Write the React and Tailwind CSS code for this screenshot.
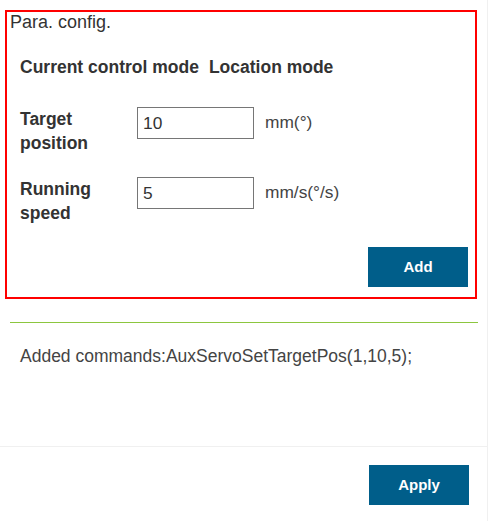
export default function App() {
  return (
    <div className="w-[488px] h-[521px] bg-white border-r border-[#f0f0f0] font-['Liberation_Sans',Arial,sans-serif] text-[#333]">
      <div className="pt-[10px] pl-[5px]">
        <div className="w-[472px] h-[289px] border-2 border-[#ff0000] flex flex-col">
          <div className="pl-[3px] text-[18px] leading-[20px] text-[#333]">Para. config.</div>

          <div className="mt-[25px] pl-[13px] text-[17.5px] leading-[20px] font-bold text-[#333] flex">
            <span>Current control mode</span>
            <span className="ml-[10px]">Location mode</span>
          </div>

          <div className="mt-[30px] pl-[13px] flex items-start">
            <div className="w-[100px] text-[17.5px] leading-[24px] font-bold">Target position</div>
            <div className="ml-[17px] flex items-center">
              <input
                defaultValue="10"
                className="w-[117px] h-[32px] border border-[#767676] pl-[5px] text-[17.33px] text-[#333] outline-none"
              />
              <span className="ml-[11px] text-[17.33px] text-[#444]">mm(°)</span>
            </div>
          </div>

          <div className="mt-[22px] pl-[13px] flex items-start">
            <div className="w-[100px] text-[17.5px] leading-[24px] font-bold">Running speed</div>
            <div className="ml-[17px] flex items-center">
              <input
                defaultValue="5"
                className="w-[117px] h-[32px] border border-[#767676] pl-[5px] text-[17.33px] text-[#333] outline-none"
              />
              <span className="ml-[11px] text-[17.33px] text-[#444]">mm/s(°/s)</span>
            </div>
          </div>

          <div className="mt-[22px] pr-[7px] flex justify-end">
            <button className="w-[100px] h-[40px] bg-[#005e8a] text-white text-[15px] font-bold">Add</button>
          </div>
        </div>
      </div>

      <div className="mt-[23px] ml-[10px] w-[468px] h-px bg-[#8cc63f]"></div>

      <div className="h-[123px] pt-[23px] pl-[20px] text-[17.5px] leading-[20px] text-[#444]">
        Added commands:AuxServoSetTargetPos(1,10,5);
      </div>

      <div className="border-t border-[#f0f0f0] pt-[18px] pr-[18px] flex justify-end">
        <button className="w-[100px] h-[40px] bg-[#005e8a] text-white text-[15px] font-bold">Apply</button>
      </div>
    </div>
  );
}
